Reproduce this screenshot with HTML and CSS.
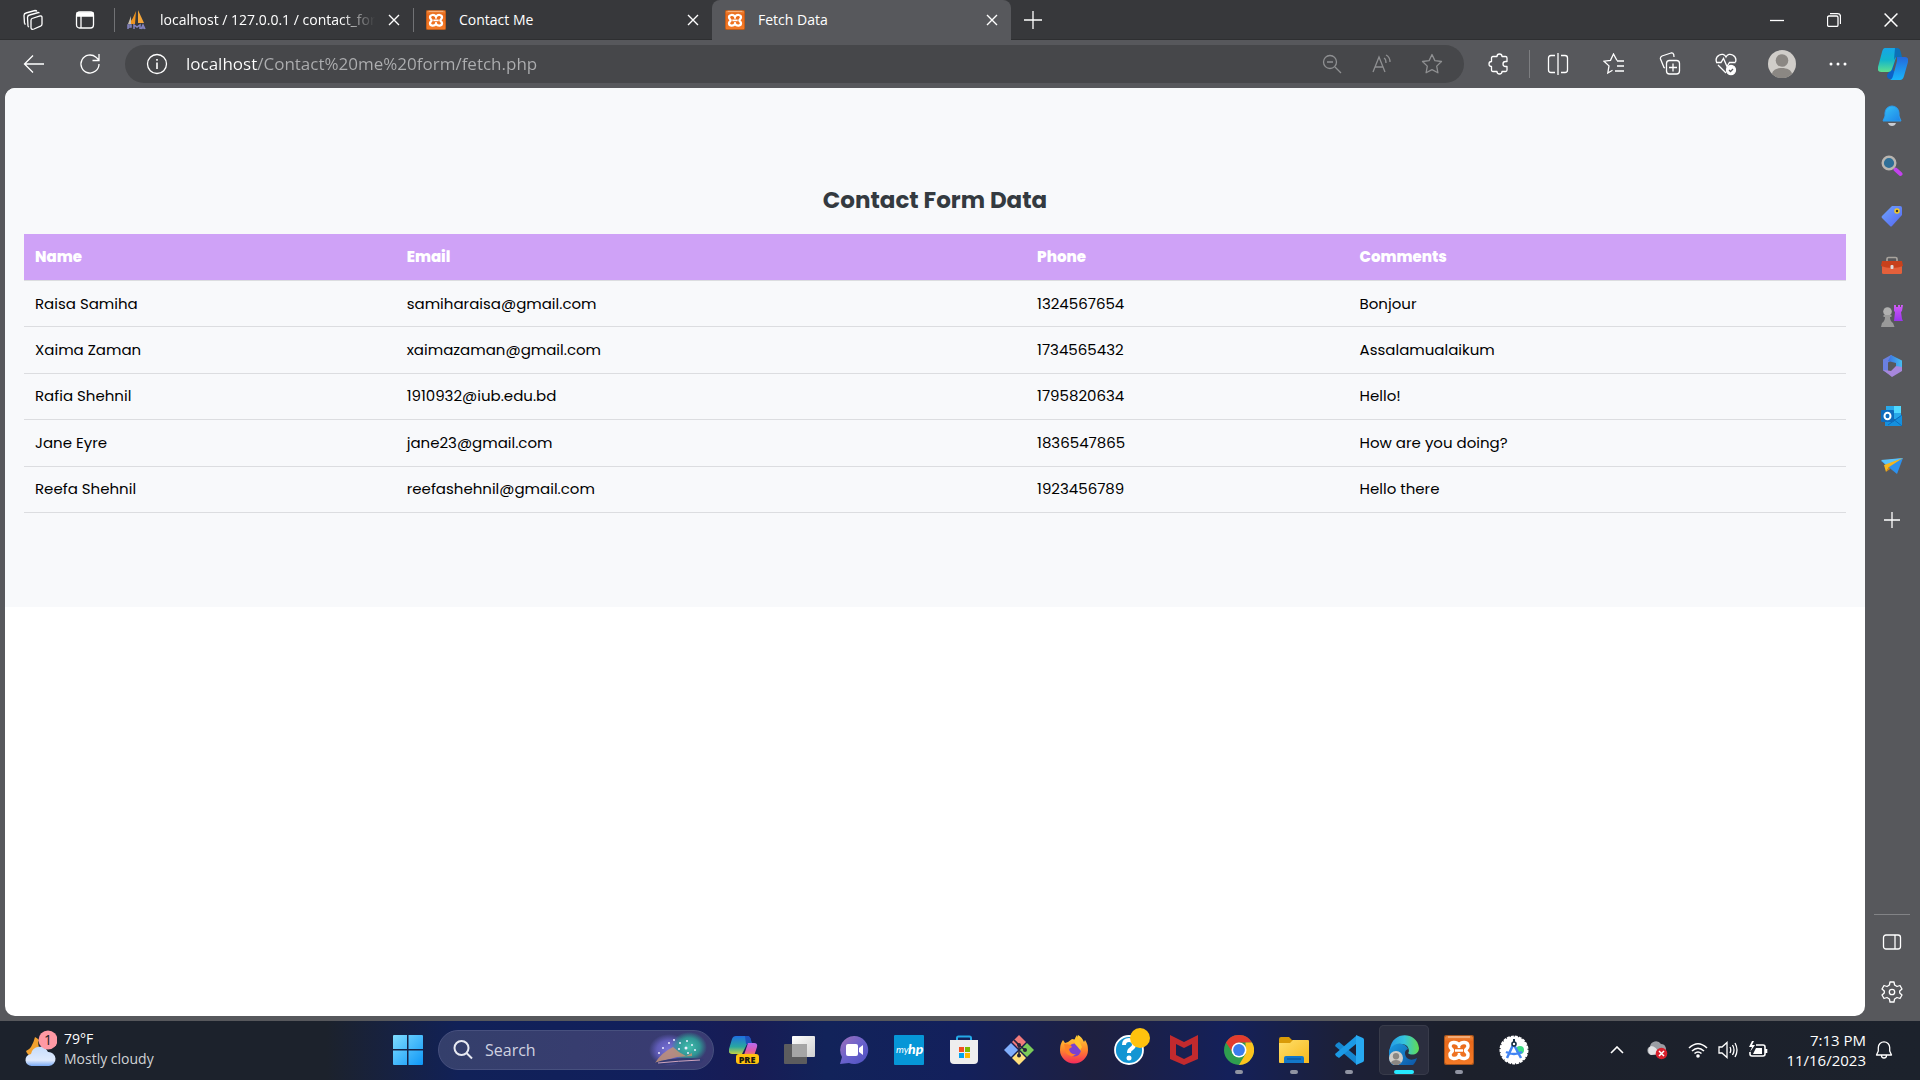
FILE: index.html
```html
<!DOCTYPE html>
<html lang="en">
<head>
<meta charset="utf-8">
<title>Fetch Data</title>
<link rel="stylesheet" href="styles.css">
</head>
<body>
<svg class="defs" aria-hidden="true">
  <defs>
    <linearGradient id="g-orange" x2="0" y2="1"><stop stop-color="#f08a3c"/><stop offset=".2" stop-color="#e9691b"/><stop offset="1" stop-color="#f47a26"/></linearGradient>
    <linearGradient id="g-cop1" x2="0" y2="1"><stop stop-color="#16a5e8"/><stop offset=".5" stop-color="#12b5cc"/><stop offset="1" stop-color="#5fe08e"/></linearGradient>
    <linearGradient id="g-cop2" x2="0" y2="1"><stop stop-color="#2468dc"/><stop offset="1" stop-color="#19b6fb"/></linearGradient>
    <linearGradient id="g-cop3" x2="0" y2="1"><stop stop-color="#1f6fe0"/><stop offset=".6" stop-color="#29a7a0"/><stop offset="1" stop-color="#c3d344"/></linearGradient>
    <linearGradient id="g-cop4" x2="0" y2="1"><stop stop-color="#b56bf2"/><stop offset=".6" stop-color="#e05aa8"/><stop offset="1" stop-color="#f5844e"/></linearGradient>
    <linearGradient id="g-bell" x2="1" y2="1"><stop stop-color="#36c3f6"/><stop offset="1" stop-color="#1c83e8"/></linearGradient>
    <linearGradient id="g-tag" x2="1" y2="1"><stop stop-color="#6fa5ff"/><stop offset="1" stop-color="#5566f0"/></linearGradient>
    <linearGradient id="g-purple" x2="0" y2="1"><stop stop-color="#d05cf5"/><stop offset="1" stop-color="#9a35ee"/></linearGradient>
    <linearGradient id="g-win" x2="1" y2="1"><stop stop-color="#7fdcff"/><stop offset="1" stop-color="#0e97f7"/></linearGradient>
    <linearGradient id="g-cloud" x2="0" y2="1"><stop stop-color="#c6dcfb"/><stop offset=".7" stop-color="#dfeafd"/><stop offset="1" stop-color="#78a8f2"/></linearGradient>
    <linearGradient id="g-chat" x2="1" y2="1"><stop stop-color="#a070b8"/><stop offset=".5" stop-color="#6a62cc"/><stop offset="1" stop-color="#4d50c0"/></linearGradient>
    <linearGradient id="g-fox" x2="0" y2="1"><stop stop-color="#ffd83c"/><stop offset=".5" stop-color="#ff8a2a"/><stop offset="1" stop-color="#f42a5c"/></linearGradient>
    <linearGradient id="g-folder" x2="1" y2="1"><stop stop-color="#ffdf6b"/><stop offset="1" stop-color="#f8b91c"/></linearGradient>
    <linearGradient id="g-edge1" x2="1" y2="0"><stop stop-color="#259be8"/><stop offset=".5" stop-color="#35c4dc"/><stop offset="1" stop-color="#62dc50"/></linearGradient>
    <linearGradient id="g-edge2" x2="1" y2="1"><stop stop-color="#1b9de2"/><stop offset="1" stop-color="#0c4e9e"/></linearGradient>
    <linearGradient id="g-gray" x2="1" y2="1"><stop stop-color="#fff"/><stop offset="1" stop-color="#cfcfcf"/></linearGradient>
    <linearGradient id="g-365" x2="1" y2="0"><stop stop-color="#3b6fe0"/><stop offset="1" stop-color="#46bdf0"/></linearGradient>
    <radialGradient id="g-sky1"><stop stop-color="#7a74d8"/><stop offset=".6" stop-color="#6a64ca" stop-opacity=".8"/><stop offset="1" stop-color="#6a64ca" stop-opacity="0"/></radialGradient>
    <radialGradient id="g-sky2"><stop stop-color="#43c0ae"/><stop offset=".6" stop-color="#2f9f98" stop-opacity=".9"/><stop offset="1" stop-color="#2f9f98" stop-opacity="0"/></radialGradient>
    <symbol id="xampp" viewBox="0 0 30 30">
      <rect width="30" height="30" rx="2" fill="#a9551c"/><rect x="1" y="1" width="28" height="28" rx="2" fill="url(#g-orange)"/>
      <path d="M4 2h22" stroke="#f6b98c" stroke-width="1.5"/>
      <path d="M15 10C12 6 6 7 6 11C6 14 8.500 14 8.500 15.500C8.500 17 6 17 6 20C6 24 12 25 15 21C18 25 24 24 24 20C24 17 21.500 17 21.500 15.500C21.500 14 24 14 24 11C24 7 18 6 15 10Z" fill="none" stroke="#fff" stroke-width="3.400" stroke-linejoin="round"/>
      <path d="M11 15.500h8M15 10v3M15 18v3" stroke="#fff" stroke-width="2.600"/>
    </symbol>
    <symbol id="cross" viewBox="0 0 12 12"><path d="M1 1l10 10M11 1L1 11" fill="none" stroke="currentColor" stroke-width="1.400"/></symbol>
    <symbol id="person" viewBox="0 0 28 28"><circle cx="14" cy="14" r="14" fill="#d0cdc9"/><circle cx="14" cy="10.500" r="6.300" fill="#8b8783"/><path d="M4 24c1-8 19-8 20 0a14 14 0 0 1-20 0z" fill="#8b8783"/></symbol>
  </defs>
</svg>

<header class="tabstrip">
  <div class="strip-tools">
    <button aria-label="Workspaces"><svg width="22" height="22" viewBox="0 0 22 22" class="line"><path d="M10 9.500l8-2.500q2-.5 2 1.500V15q0 1.500-1.500 2.200L12 20q-3 1-3-1.500v-7q0-1.500 1-2z"/><path d="M6 17.500l-.5-9q0-2 2-2.500l9-2.500 1 .5M2.500 14.500L2 6.500q0-2 2-2.500l9-2.500q1.500 0 2 1M2.500 14.500l1 1M6 17.500l1 .5"/></svg></button>
    <button aria-label="Tab actions"><svg width="20" height="20" viewBox="0 0 20 20" class="line"><rect x="1.500" y="2" width="17" height="16" rx="3"/><path d="M2 3h16v3H2z" fill="#fff"/><path d="M6 6v12"/></svg></button>
  </div>
  <div class="tabs" role="tablist">
    <div class="tab" role="tab"><svg width="20" height="20" viewBox="0 0 20 20"><path d="M9 1L8 14H2Q6 9 9 1z" fill="#f0941e"/><path d="M11 0l6 13h-6z" fill="#f6a73a"/><path d="M4 6L1 14h3z" fill="#c9c0b0"/><path d="M1 19v-4h3v2H1M7 19v-4l3 2 3-2v4M14 19l2-4 2 4M15 18h3" fill="none" stroke="#8584c0" stroke-width="1.500"/></svg><span class="tab-title clipped">localhost / 127.0.0.1 / contact_form</span><button aria-label="Close tab"><svg width="12" height="12"><use href="#cross"/></svg></button></div>
    <div class="tab" role="tab"><svg width="20" height="20"><use href="#xampp"/></svg><span class="tab-title">Contact Me</span><button aria-label="Close tab"><svg width="12" height="12"><use href="#cross"/></svg></button></div>
    <div class="tab active" role="tab" aria-selected="true"><svg width="20" height="20"><use href="#xampp"/></svg><span class="tab-title">Fetch Data</span><button aria-label="Close tab"><svg width="12" height="12"><use href="#cross"/></svg></button></div>
  </div>
  <button class="new-tab" aria-label="New tab"><svg width="18" height="18" viewBox="0 0 18 18" class="line"><path d="M9 0v18M0 9h18"/></svg></button>
  <div class="window-controls">
    <button aria-label="Minimize"><svg width="14" height="14" viewBox="0 0 14 14" class="line"><path d="M0 7.500h14"/></svg></button>
    <button aria-label="Restore"><svg width="14" height="14" viewBox="0 0 14 14" class="line"><rect x=".5" y="3" width="10.500" height="10.500" rx="1.500"/><path d="M3 .7h7.500q3 0 3 3V11"/></svg></button>
    <button aria-label="Close"><svg width="14" height="14" viewBox="0 0 12 12"><path d="M.5.5l11 11M11.500.5l-11 11" class="line"/></svg></button>
  </div>
</header>

<nav class="toolbar">
  <div class="nav-buttons">
    <button aria-label="Back"><svg width="22" height="20" viewBox="0 0 22 20" class="line"><path d="M21 10H1.500M10 1.500L1.500 10l8.500 8.500"/></svg></button>
    <button aria-label="Refresh"><svg width="22" height="22" viewBox="0 0 22 22" class="line"><path d="M20 11a9 9 0 1 1-3-6.700L20 7M20 1v6.500h-6.500"/></svg></button>
  </div>
  <div class="address">
    <svg class="line" width="22" height="22" viewBox="0 0 22 22"><circle cx="11" cy="11" r="9.500"/><path d="M11 9.500V16M11 6v1.700" stroke-width="1.600"/></svg>
    <input class="url" type="text" aria-label="Address" value="localhost/Contact%20me%20form/fetch.php">
    <div class="address-actions">
      <button aria-label="Zoom out"><svg class="line" width="20" height="20" viewBox="0 0 20 20"><circle cx="8" cy="8" r="6.500"/><path d="M5 8h6M13 13l6 6"/></svg></button>
      <button aria-label="Read aloud"><svg class="line" width="22" height="20" viewBox="0 0 22 20"><path d="M2 18L8 3l6 15M4 13h8M13 4q2 1 2 5M15 1q4 2 4 7"/></svg></button>
      <button aria-label="Add to favorites"><svg class="line" width="22" height="22" viewBox="0 0 22 22"><path d="M11 1.500l2.900 6.100 6.600.9-4.800 4.600 1.200 6.700L11 16.600l-5.900 3.200 1.200-6.700L1.500 8.500l6.600-.9z" stroke-linejoin="round"/></svg></button>
    </div>
  </div>
  <div class="browser-actions">
    <button aria-label="Extensions"><svg class="line" width="22" height="24" viewBox="0 0 22 24"><path d="M5 4.500h4a2.500 2.500 0 0 1 5 0h3.500q1.500 0 1.500 1.500v3.500h-1.500a2.500 2.500 0 0 0 0 5H19V18q0 1.500-1.500 1.500H14a2.500 2.500 0 0 1-5 0H5Q3.500 19.500 3.500 18v-3.500a2.500 2.500 0 0 1 0-5V6Q3.500 4.500 5 4.500z" stroke-linejoin="round"/></svg></button>
    <button aria-label="Split screen"><svg class="line" width="22" height="22" viewBox="0 0 22 22"><path d="M11 0v22M8 2.500H4Q1.500 2.500 1.500 5v12q0 2.500 2.500 2.500h4M14 2.500h4q2.500 0 2.500 2.500v12q0 2.500-2.500 2.500h-4"/></svg></button>
    <button aria-label="Favorites"><svg class="line" width="22" height="22" viewBox="0 0 22 22"><path d="M14 7.500L10.500 1l-3 6.300-6.500.9 5 4.700L4.800 20l4.700-2.700M14 8h7M14 13h7M12 18h9"/></svg></button>
    <button aria-label="Collections"><svg class="line" width="22" height="24" viewBox="0 0 22 24"><path d="M6 16l-1-.5L1.500 7q-.5-2 1.500-3l9-3q2-.5 2.700 1.500L15 5"/><rect x="7.500" y="8.500" width="13" height="13.500" rx="3"/><path d="M14 11.500v8M10 15.500h8"/></svg></button>
    <button aria-label="Browser essentials"><svg class="line" width="22" height="24" viewBox="0 0 22 24"><path d="M1.500 10C-.5 4 8-1 11 5c3-6 11.500-1 9.500 5M3 13l8 8M1 10.500h5l2.500-4 3.500 8 2.500-4h6"/><circle cx="16" cy="18" r="4.500" fill="#fff"/><path d="M14 18l1.500 1.500L18 17" stroke="#57585c"/></svg></button>
    <button aria-label="Profile"><svg width="28" height="28"><use href="#person"/></svg></button>
    <button aria-label="More"><svg width="18" height="4" viewBox="0 0 18 4" fill="#fff"><circle cx="2" cy="2" r="1.500"/><circle cx="9" cy="2" r="1.500"/><circle cx="16" cy="2" r="1.500"/></svg></button>
  </div>
  <button class="copilot" aria-label="Copilot"><svg width="30" height="32" viewBox="0 0 30 32"><path d="M11 24l4-12 7-11q-3 0-3.500 4L15 22l5 4-5 5h-3q-3 0-3-4z" fill="#0c62c8"/><path d="M7 0h11q3 0 2 4l-6 17q-1 3-4 3H3q-4 0-3-5L4 4q1-4 3-4z" fill="url(#g-cop1)"/><path d="M17 0h2q3 0 4 5l1 4h-5q-2 0-3 3z" fill="#0c70b8"/><path d="M19 9h8q4 0 3 5l-4 14q-1 4-4 4H11q3 0 4-4l4-15z" fill="url(#g-cop2)"/></svg></button>
</nav>

<div class="workspace">
  <main class="viewport">
    <section class="contact-data">
      <h1>Contact Form Data</h1>
      <table>
        <colgroup><col class="col-name"><col class="col-email"><col class="col-phone"><col></colgroup>
        <thead><tr><th>Name</th><th>Email</th><th>Phone</th><th>Comments</th></tr></thead>
        <tbody>
          <tr><td>Raisa Samiha</td><td>samiharaisa@gmail.com</td><td>1324567654</td><td>Bonjour</td></tr>
          <tr><td>Xaima Zaman</td><td>xaimazaman@gmail.com</td><td>1734565432</td><td>Assalamualaikum</td></tr>
          <tr><td>Rafia Shehnil</td><td>1910932@iub.edu.bd</td><td>1795820634</td><td>Hello!</td></tr>
          <tr><td>Jane Eyre</td><td>jane23@gmail.com</td><td>1836547865</td><td>How are you doing?</td></tr>
          <tr><td>Reefa Shehnil</td><td>reefashehnil@gmail.com</td><td>1923456789</td><td>Hello there</td></tr>
        </tbody>
      </table>
    </section>
  </main>
  <aside class="sidebar">
    <button aria-label="Notifications"><svg width="20" height="22" viewBox="0 0 20 22"><path d="M6 18h8q-1 3-4 3t-4-3z" fill="#c9ccd2"/><path d="M1 16l2-5V8a7 7 0 0 1 14 0v3l2 5z" fill="url(#g-bell)" stroke="#2a9bee"/></svg></button>
    <button aria-label="Search"><svg width="22" height="22" viewBox="0 0 22 22"><path d="M14.500 14.500l5 4.500" stroke="#c341ee" stroke-width="4" stroke-linecap="round"/><circle cx="8" cy="8" r="6.300" fill="#2f6f97" stroke="#b9b5b0" stroke-width="2.400"/></svg></button>
    <button aria-label="Shopping"><svg width="22" height="22" viewBox="0 0 22 22"><path d="M11 1h8q2 0 2 2v7L11 21q-1 1-2 0l-8-8q-1-1 0-2z" fill="url(#g-tag)"/><circle cx="16" cy="6" r="2" fill="#3b3b30" stroke="#f4c926" stroke-width="1.500"/></svg></button>
    <button aria-label="Tools"><svg width="24" height="20" viewBox="0 0 24 20"><path d="M7 5V3q0-1.500 1.500-1.500h7Q17 1.500 17 3v2" fill="none" stroke="#a8a39d" stroke-width="1.700"/><rect x="2" y="9" width="20" height="9" rx="1.500" fill="#e4603b"/><path d="M2 5h20l1 5q-5 2-11 2T1 10z" fill="#c8411c"/><rect x="10.500" y="9" width="3" height="4" rx="1" fill="#ddd"/></svg></button>
    <button aria-label="Games"><svg width="24" height="24" viewBox="0 0 24 24"><path d="M14 1h2v2h2V1h2v2h1V1h2l-1 6-1 1 1 7 1 2h-9l1-9-1-1z" fill="url(#g-purple)"/><circle cx="7.500" cy="7.500" r="4.300" fill="#b0b0b0"/><path d="M3.500 11h8v2h-1.500q0 4 3 6l1.500 4H1l1-4q3-2 3-6H3.500z" fill="#999"/></svg></button>
    <button aria-label="Microsoft 365"><svg width="22" height="24" viewBox="0 0 22 24"><path d="M10 1L2 5.500v11l5 3V8.500L14 4z" fill="#6a80e0"/><path d="M10 1l11 5.500v10L15 12V9L7 7z" fill="url(#g-365)"/><path d="M2 16l9 7 10-6v-4l-6-1-5 5-3-.5z" fill="#a787dc"/></svg></button>
    <button aria-label="Outlook"><svg width="22" height="22" viewBox="0 0 22 22"><rect x="5" y="1" width="15" height="13" fill="#28a8ea"/><rect x="13" y="1" width="7" height="7" fill="#50d9ff"/><path d="M4 10l9 5 8-5v11H4z" fill="#1490df"/><path d="M21 10L7 20M12 14l9 7" stroke="#0b6cbb"/><rect y="5" width="13" height="12" rx="1" fill="#0f6cbd"/><ellipse cx="6.500" cy="11" rx="3" ry="3.300" fill="none" stroke="#fff" stroke-width="2"/></svg></button>
    <button aria-label="Drop"><svg width="22" height="18" viewBox="0 0 22 18"><path d="M0 4L22 1 16 17z" fill="#2d91ee"/><path d="M0 3L22 1 5 8z" fill="#5ac2fa"/><path d="M22 1L3 8l2 7 3-5z" fill="#f6b61c"/><path d="M5 15l4-3-1-2z" fill="#d98a12"/></svg></button>
    <button class="customize" aria-label="Customize"><svg width="16" height="16" viewBox="0 0 16 16" class="line"><path d="M8 0v16M0 8h16"/></svg></button>
    <div class="sidebar-foot">
      <button aria-label="Hide sidebar"><svg class="line" width="20" height="18" viewBox="0 0 20 18"><rect x="1.500" y="2" width="17" height="14" rx="2.500"/><path d="M13 2v14"/></svg></button>
      <button aria-label="Settings"><svg class="line" width="22" height="22" viewBox="0 0 22 22"><path d="M9 1h4l.6 3L16 5.500l3-1 2 3.500-2.300 2v2l2.300 2-2 3.500-3-1-2.400 1.500L13 21H9l-.6-3L6 16.500l-3 1L1 14l2.300-2v-2L1 8l2-3.500 3 1L8.400 4z" stroke-linejoin="round"/><circle cx="11" cy="11" r="2.700"/></svg></button>
    </div>
  </aside>
</div>

<footer class="taskbar">
  <button class="weather">
    <svg width="32" height="38" viewBox="0 0 32 38"><path d="M10 7Q7 19 1 21q2 6 8 5l6-7q-3-5-1-9-2-2-4-3z" fill="#f2a12e"/><path d="M7 36a6 6 0 0 1-1-12 9 9 0 0 1 17-2 7 7 0 0 1 1 14z" fill="url(#g-cloud)"/><circle cx="23" cy="10" r="9.500" fill="#ff99a4"/><text x="23" y="15" text-anchor="middle" class="badge-text">1</text></svg>
    <span class="weather-text"><span class="temp">79°F</span><span>Mostly cloudy</span></span>
  </button>
  <div class="dock">
    <button aria-label="Start"><svg width="30" height="30" viewBox="0 0 30 30" fill="url(#g-win)"><path d="M0 1q0-1 1-1h13v14H0zM15.500 0H29q1 0 1 1v13H15.500zM0 15.500h14V30H1q-1 0-1-1zM15.500 15.500H30V29q0 1-1 1H15.500z"/></svg></button>
    <label class="search">
      <svg class="search-icon" width="20" height="20" viewBox="0 0 20 20"><circle cx="8.500" cy="8" r="7"/><path d="M13.500 13l5.500 5.500"/></svg>
      <input type="text" placeholder="Search" aria-label="Search">
      <svg width="60" height="36" viewBox="0 0 60 36"><ellipse cx="20" cy="18" rx="20" ry="16" fill="url(#g-sky1)"/><ellipse cx="40" cy="15" rx="18" ry="15" fill="url(#g-sky2)"/><path d="M6 31q6-10 18-16 6 6 13 9l6-3v3l-15 1z" fill="#c19177" opacity=".85"/><path d="M5 31q20-7 50-4l-3 4q-20-1-40 2z" fill="#343a72"/><path d="M9 31q20-2 42-3" stroke="#cfa4bd" fill="none"/><g fill="#eef"><circle cx="14" cy="16" r="1"/><circle cx="20" cy="11" r="1"/><circle cx="25" cy="8" r="1"/><circle cx="31" cy="11" r="1"/><circle cx="38" cy="9" r="1"/><circle cx="43" cy="13" r="1"/><circle cx="37" cy="16" r="1.500"/><circle cx="30" cy="17" r="1"/><circle cx="46" cy="18" r="1"/><circle cx="39" cy="21" r="1"/><circle cx="10" cy="21" r="1"/></g></svg>
    </label>
    <button aria-label="Copilot preview"><svg width="30" height="30" viewBox="0 0 30 30"><path d="M7 1h11q3 0 4 5l1 3h-5l-5 10H3q-4 0-3-5L3 4q1-3 4-3z" fill="url(#g-cop3)"/><path d="M16 1h3q2 0 3 4l1 4h-6z" fill="#1e51bd"/><path d="M19 8h6q4 0 3 4l-3 9H12q3 0 4-4z" fill="url(#g-cop4)"/><rect x="7" y="19" width="23" height="10" rx="3" fill="#ffc20e"/><text x="18" y="28" text-anchor="middle" class="pre-text">PRE</text></svg></button>
    <button aria-label="Task view"><svg width="32" height="30" viewBox="0 0 32 30"><rect x="1" y="9" width="23" height="20" rx="1" fill="#5c5c5e"/><rect x="9" y="1" width="23" height="21" rx="1" fill="url(#g-gray)"/><rect x="9" y="9" width="15" height="13" fill="#a5a5a6"/></svg></button>
    <button aria-label="Chat"><svg width="30" height="30" viewBox="0 0 30 30"><path d="M15 1a14 14 0 1 1-5 27l-9 1 2-7A14 14 0 0 1 15 1z" fill="url(#g-chat)"/><rect x="7" y="9" width="12" height="12" rx="2" fill="#fff"/><path d="M20 13l4-3v10l-4-3z" fill="#fff"/></svg></button>
    <button aria-label="myHP"><svg width="30" height="30" viewBox="0 0 30 30"><rect width="30" height="30" rx="1" fill="#0696d7"/><text x="2" y="18" class="my-text">my</text><text x="14" y="19" class="hp-text">hp</text></svg></button>
    <button aria-label="Microsoft Store"><svg width="30" height="30" viewBox="0 0 30 30"><path d="M8 7V3q0-1.500 1.500-1.500h11Q22 1.500 22 3v4" fill="none" stroke="#24a8e8" stroke-width="2"/><path d="M1 5h28v20q0 4-4 4H5q-4 0-4-4z" fill="#eee"/><path d="M10 12h5v5h-5z" fill="#f25022"/><path d="M16 12h5v5h-5z" fill="#7fba00"/><path d="M10 18h5v5h-5z" fill="#00a4ef"/><path d="M16 18h5v5h-5z" fill="#ffb900"/></svg></button>
    <button aria-label="Git"><svg width="30" height="30" viewBox="0 0 30 30"><path d="M15 0l7 7-7 7-7-7z" fill="#f17b7b"/><path d="M7 8l7 7-7 7-7-7z" fill="#80aefc"/><path d="M23 8l7 7-7 7-7-7z" fill="#7bcb59"/><path d="M15 16l7 7-7 7-7-7z" fill="#ffe07c"/><path d="M10 5l5 5v11M15 10l6 5" stroke="#26263c" stroke-width="1.600" fill="none"/><circle cx="15" cy="10" r="2" fill="#26263c"/><circle cx="15" cy="20.500" r="2" fill="#26263c"/><circle cx="21" cy="15" r="2" fill="#26263c"/></svg></button>
    <button aria-label="Firefox"><svg width="30" height="30" viewBox="0 0 30 30"><path d="M4 5l2 3 3-1 4-3 5 1 1-5q4 2 6 7l1-2q3 4 3 10a14 13.500 0 0 1-28 0Q1 9 4 5z" fill="url(#g-fox)"/><circle cx="15.500" cy="15" r="6.500" fill="#7a41d0"/><path d="M5 9q7 0 8 3l-3 2q1 6 7 5-5 5-10-1z" fill="#ff8228"/><path d="M18 0q3 8 5 12-2 2-1 4-4-5-6-7-2-4 2-9z" fill="#ffc42d"/></svg></button>
    <button aria-label="Help"><svg width="38" height="38" viewBox="0 0 38 38" class="help-icon"><circle cx="16" cy="23" r="14" fill="#1295d3" stroke="#fff" stroke-width="1.800"/><path d="M11 18q0-5 5-5t5 5q0 2-3 4-2 1-2 4" fill="none" stroke="#fff" stroke-width="4"/><circle cx="16" cy="31" r="2.500" fill="#fff"/><circle cx="27" cy="11" r="10" fill="#ffc20e"/></svg></button>
    <button aria-label="McAfee"><svg width="28" height="30" viewBox="0 0 28 30"><path d="M0 0l14 7L28 0v24l-14 6-14-6zM6 9v11l8 4 8-4V9l-8 4z" fill="#c22a2e" fill-rule="evenodd"/></svg></button>
    <button class="running" aria-label="Chrome"><svg width="30" height="30" viewBox="0 0 30 30"><circle cx="15" cy="15" r="15" fill="#2f9e4f"/><path d="M2 7.500A15 15 0 0 1 28 7.500H15L9 18z" fill="#e33b2e"/><path d="M28 7.500A15 15 0 0 1 15 30l6.500-11V7.500z" fill="#fcc31e"/><circle cx="15" cy="15" r="7.500" fill="#fff"/><circle cx="15" cy="15" r="5.900" fill="#3b7ded"/></svg></button>
    <button class="running" aria-label="File Explorer"><svg width="30" height="28" viewBox="0 0 30 28"><path d="M0 3q0-2 2-2h8l3 3h16v8H0z" fill="#d99b08"/><path d="M0 7h11l3-3h15q1 0 1 1v22H1q-1 0-1-1z" fill="url(#g-folder)"/><path d="M5 27v-5q0-2 2-2h16q2 0 2 2v5z" fill="#1377c9"/><path d="M8 23h14" stroke="#0a4f91"/></svg></button>
    <button class="running" aria-label="Visual Studio Code"><svg width="30" height="30" viewBox="0 0 30 30"><path d="M2 9l3-2 17 14v8L1 11z" fill="#1687d1"/><path d="M2 21l3 2L22 9V1L1 19z" fill="#1b9ae6"/><path d="M22 0l7 3q1 .5 1 2v20q0 1.500-1 2l-7 3z" fill="#27a9f1"/></svg></button>
    <button class="running current" aria-label="Edge"><svg width="30" height="30" viewBox="0 0 30 30"><path d="M1 13a14.500 14.500 0 1 0 27 10c-7 4-12 0-12-5q0-3 3-4c-3-7-15-7-18-1z" fill="url(#g-edge2)"/><path d="M1 14C3-4 28-4 30 13c0 7-8 8-11 5 2-1 1-9-6-9Q5 8 1 14z" fill="url(#g-edge1)"/><svg y="16" width="14" height="14"><use href="#person"/></svg></svg></button>
    <button class="running" aria-label="XAMPP"><svg width="30" height="30"><use href="#xampp"/></svg></button>
    <button aria-label="Android Studio"><svg width="30" height="30" viewBox="0 0 30 30"><circle cx="15" cy="15" r="13.500" fill="#fff" stroke="#fff" stroke-width="2" stroke-dasharray="3 1"/><circle cx="21" cy="15" r="4" fill="#3ddc84"/><path d="M8 23l6.500-14L22 23M7 17q8 4 16 0" fill="none" stroke="#4285f4" stroke-width="2.500"/><circle cx="15" cy="9" r="2" fill="#fff" stroke="#173042" stroke-width="1.600"/><path d="M15 4v3" stroke="#173042" stroke-width="2"/></svg></button>
  </div>
  <div class="tray">
    <button class="chevron" aria-label="Show hidden icons"><svg class="line bold" width="14" height="8" viewBox="0 0 14 8"><path d="M1 7l6-6 6 6"/></svg></button>
    <button class="cloud" aria-label="OneDrive"><svg width="22" height="20" viewBox="0 0 22 20"><path d="M5 15a4.500 4.500 0 0 1-1-8.500A6 6 0 0 1 15 4a5 5 0 0 1 3 9z" fill="#9b9ea4"/><path d="M5 15a5 5 0 0 1 0-9q5 0 9 8z" fill="#e2e3e5"/><circle cx="15.500" cy="13.500" r="5.800" fill="#d8202c"/><path d="M13 11l5 5M18 11l-5 5" stroke="#fff" stroke-width="1.500"/></svg></button>
    <button class="status" aria-label="Network, volume, battery">
      <svg class="line bold" width="20" height="16" viewBox="0 0 20 16"><path d="M1 6q9-8.500 18 0M4 9q6-5.500 12 0M6.500 11.500q3.500-3 7 0"/><circle cx="10" cy="14" r="1" fill="#fff"/></svg>
      <svg class="line" width="20" height="18" viewBox="0 0 20 18"><path d="M1 6h3l5-4.500v15L4 12H1zM12 6q1.500 3 0 6M14.500 4q3 5 0 10M17 2q4 7 0 14"/></svg>
      <svg class="line bold" width="20" height="18" viewBox="0 0 20 18"><path d="M8 4h7q2 0 2 2v7q0 2-2 2H4q-2 0-2-2v-2M18.500 8v4"/><path d="M8 7h6v6H5z" fill="#fff" stroke="none"/><path d="M4 0L1 6h3l-2 5 5-7H4l2-4z" fill="#fff" stroke="none"/></svg>
    </button>
    <button class="clock"><span>7:13 PM</span><span>11/16/2023</span></button>
    <button class="alerts" aria-label="Notifications"><svg class="line" width="18" height="20" viewBox="0 0 18 20"><path d="M1.500 15l1.800-4V7.500a5.700 5.700 0 0 1 11.400 0V11l1.800 4zM6.500 15.500q0 2.500 2.500 2.500t2.500-2.500" stroke-linejoin="round"/></svg></button>
  </div>
</footer>
</body>
</html>
```
FILE: styles.css
```css
* { box-sizing: border-box; }

body {
  margin: 0;
  min-height: 100vh;
  display: flex;
  flex-direction: column;
  background: #57585c;
  color: #fff;
  font: 14px/20px "Segoe UI", "Open Sans", "Noto Sans", sans-serif;
}

button, input {
  margin: 0;
  padding: 0;
  border: 0;
  outline: 0;
  background: none;
  color: inherit;
  font: inherit;
}

button {
  display: flex;
  align-items: center;
  justify-content: center;
  flex: none;
}

svg { display: block; flex: none; }
.defs { position: absolute; width: 0; height: 0; }
.line { fill: none; stroke: currentColor; stroke-width: 1.300; }
.line.bold { stroke-width: 1.600; }

/* Tab strip */
.tabstrip {
  display: flex;
  height: 40px;
  background: #37383b;
  border-bottom: 1px solid #2e2f31;
}

.strip-tools { display: flex; width: 114px; padding-left: 7px; }
.strip-tools button { width: 52px; }

.tabs { display: flex; flex: 0 1 897px; min-width: 0; }

.tab {
  flex: 1 1 0;
  min-width: 0;
  height: 40px;
  display: flex;
  align-items: center;
  gap: 13px;
  padding: 0 13px;
  background: linear-gradient(#717275, #717275) left center / 1px 24px no-repeat;
}

.tab.active { background: #57585c; border-radius: 8px 8px 0 0; }

.tab-title {
  flex: 1;
  overflow: hidden;
  white-space: nowrap;
}

.tab-title.clipped {
  -webkit-mask-image: linear-gradient(to right, #000 84%, transparent);
  mask-image: linear-gradient(to right, #000 84%, transparent);
}

.new-tab { width: 44px; }
.window-controls { display: flex; margin-left: auto; padding-right: 1px; }
.window-controls button { width: 57px; }

/* Toolbar */
.toolbar {
  display: flex;
  align-items: center;
  height: 48px;
}

.nav-buttons { display: flex; width: 125px; padding-left: 6px; }
.nav-buttons button { width: 56px; }

.address {
  flex: 1;
  min-width: 0;
  height: 38px;
  display: flex;
  align-items: center;
  gap: 18px;
  padding: 0 7px 0 21px;
  border-radius: 19px;
  background: #46474a;
}

/* The host name is bright, the rest of the address is dimmed */
.url {
  flex: 1;
  min-width: 0;
  font-size: 17px;
  line-height: 24px;
  color: transparent;
  background: linear-gradient(to right, #fff 72px, #adaeb0 72px);
  -webkit-background-clip: text;
  background-clip: text;
}

.address-actions { display: flex; color: #8f9092; }
.address-actions button { width: 50px; }

.browser-actions { display: flex; align-items: center; height: 28px; padding-left: 4px; }
.browser-actions button { width: 56px; height: 28px; }
.browser-actions button:first-child { width: 62px; border-right: 1px solid #7d7e81; }
.copilot { width: 54px; }

/* Content and sidebar */
.workspace {
  flex: 1;
  display: flex;
}

.viewport {
  flex: 1;
  min-width: 0;
  margin: 0 0 5px 5px;
  border-radius: 10px;
  overflow: hidden;
  background: #fff;
}

.contact-data {
  padding: 94px 19px;
  background: #f8f9fb;
  color: #000;
  font: 15px/24px Poppins, Inter, sans-serif;
}

h1 {
  margin: 0 0 16px;
  color: #343a40;
  font-size: 23px;
  line-height: 36px;
  font-weight: 700;
  text-align: center;
}

table {
  width: 100%;
  height: 279px;
  table-layout: fixed;
  border-collapse: separate;
  border-spacing: 0;
}

.col-name { width: 20.4%; }
.col-email { width: 34.6%; }
.col-phone { width: 17.7%; }

th, td {
  height: 46px;
  padding: 0 11px;
  border-bottom: 1px solid #dcdde0;
  text-align: left;
}

th {
  height: 47px;
  background: #cfa2f7;
  color: #fff;
  font-weight: 800;
}

.sidebar {
  width: 55px;
  display: flex;
  flex-direction: column;
  padding: 3px 1px 4px 0;
}

.sidebar button { width: 100%; height: 50px; }
.sidebar .customize { margin-top: 4px; }

.sidebar-foot {
  margin: auto 9px 0;
  padding-top: 2px;
  border-top: 1px solid #828386;
}

/* Taskbar */
.taskbar {
  display: grid;
  grid-template-columns: 1fr auto 1fr;
  height: 59px;
  background: linear-gradient(to right, #1c222c 17%, #112158 24%, #111f5c 34%, #181c55 39%, #12235a 43%, #13205c 50%, #1e2040 57%, #14205a 64%, #1c2038 70%, #1c202b 76%, #1c222c);
}

.weather {
  justify-self: start;
  gap: 7px;
  padding: 0 8px 4px 25px;
  color: #d0d2d5;
}

.weather-text { display: flex; flex-direction: column; text-align: left; }
.temp { color: #fff; }
.badge-text { font: 14px "Segoe UI", "Open Sans", sans-serif; fill: #222; }

.dock { display: flex; align-items: center; gap: 5px; padding: 0 0 2px 2px; }
.dock button { position: relative; width: 50px; height: 50px; }

.search {
  width: 276px;
  height: 40px;
  display: flex;
  align-items: center;
  gap: 12px;
  padding: 0 4px 0 14px;
  border: 1px solid #47507e;
  border-radius: 20px;
  background: linear-gradient(to right, #343f6b, #3a3b73);
}

.search input { flex: 1; min-width: 0; font-size: 16px; }
.search input::placeholder { color: #cfd2e0; opacity: 1; }
.search-icon { fill: none; stroke: #e8eaf2; stroke-width: 2; }

.running::after {
  content: "";
  position: absolute;
  bottom: 1px;
  left: 50%;
  width: 8px;
  height: 4px;
  margin-left: -4px;
  border-radius: 2px;
  background: #9094a2;
}

.dock .current { background: #2b2e3f; border-radius: 5px; box-shadow: inset 0 0 0 1px #383b4a; }
.current::after { width: 20px; margin-left: -10px; background: #27e8ff; }

.help-icon { margin: -8px -5px 0 0; }
.pre-text { font: 800 9px "Open Sans", sans-serif; fill: #1c1a10; }
.my-text { font: italic 10px Lato, sans-serif; fill: #fff; }
.hp-text { font: italic 900 14px Lato, sans-serif; fill: #fff; }

.tray { display: flex; justify-self: end; padding: 0 18px 2px 0; }
.chevron { width: 40px; }
.cloud { width: 40px; margin-right: 6px; }
.status { gap: 10px; width: 90px; }

.clock {
  width: 93px;
  flex-direction: column;
  align-items: flex-end;
  font-size: 15px;
}

.alerts { width: 36px; }
```
